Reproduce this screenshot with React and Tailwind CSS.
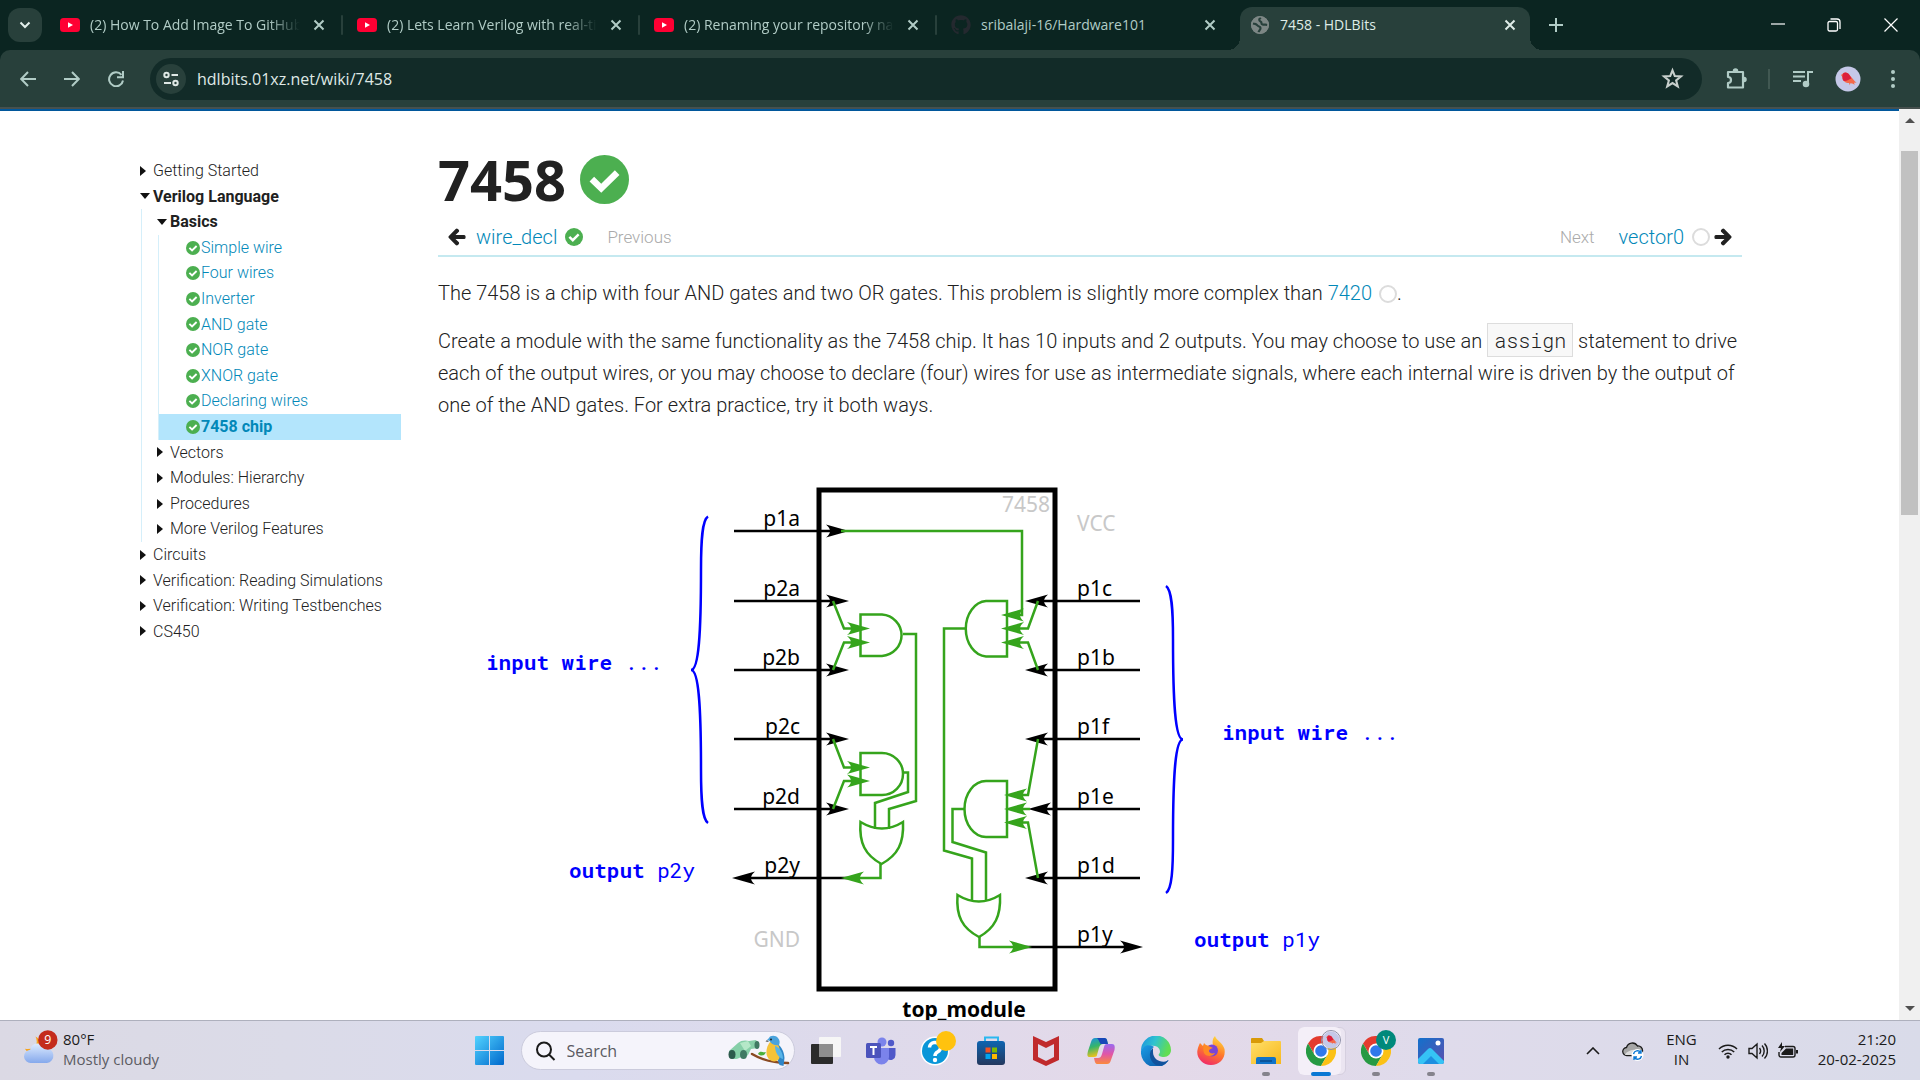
import React from "react";
import { FaArrowLeft, FaArrowRight, FaGithub } from "react-icons/fa";

const UI = "font-['Segoe_UI','Open_Sans',sans-serif]";

/* ---------- browser chrome ---------- */

function YouTubeIcon() {
  return (
    <svg viewBox="0 0 20 16" className="h-4 w-5 shrink-0" aria-hidden="true">
      <rect y="1" width="20" height="14" rx="3.5" fill="#ff0033" />
      <path d="M8 5.2v5.6L13 8z" fill="#fff" />
    </svg>
  );
}

function GlobeIcon() {
  return (
    <svg viewBox="0 0 20 20" className="h-5 w-5 shrink-0" aria-hidden="true">
      <circle cx="10" cy="10" r="9" fill="#7d8785" />
      <path d="M2.500 8.500c2 0 4 .5 5 2s3 .5 3 2.500-1.500 2-2 4.500M11 2.500c-2 1-2.500 3-.5 4s0 2.500 2 3 3-.5 5 .5" fill="none" stroke="#28403b" strokeWidth="2.200" />
      <circle cx="10" cy="10" r="8.200" fill="none" stroke="#7d8785" strokeWidth="1.600" />
    </svg>
  );
}

function CloseIcon() {
  return (
    <svg viewBox="0 0 12 12" className="h-3 w-3" aria-hidden="true">
      <path d="M1.500 1.500l9 9M10.500 1.500l-9 9" stroke="currentColor" strokeWidth="2" fill="none" />
    </svg>
  );
}

const TABS = [
  { title: "(2) How To Add Image To GitHub", icon: <YouTubeIcon />, fade: true },
  { title: "(2) Lets Learn Verilog with real-time", icon: <YouTubeIcon />, fade: true },
  { title: "(2) Renaming your repository name", icon: <YouTubeIcon />, fade: true },
  { title: "sribalaji-16/Hardware101", icon: <FaGithub className="h-5 w-5 shrink-0 text-[#24292f]" /> },
];

function TabStrip() {
  return (
    <div className="flex h-[50px] items-stretch bg-[#0b2521] text-sm text-[#b1ccc6]">
      <div className="flex w-[46px] items-center pl-2">
        <button aria-label="Search tabs" className="flex h-[34px] w-[34px] items-center justify-center rounded-xl bg-[#28403b] text-[#e2efeb]">
          <svg viewBox="0 0 12 8" className="h-2 w-3"><path d="M1.500 1.500L6 6l4.500-4.500" stroke="currentColor" strokeWidth="2" fill="none" /></svg>
        </button>
      </div>
      <div className="flex min-w-0 flex-1" role="tablist">
        {TABS.map((t, i) => (
          <div key={t.title} className="flex w-[297px] min-w-0 items-center">
            <button role="tab" aria-selected="false" className="flex min-w-0 flex-1 items-center gap-[10px] pl-[14px] text-left">
              {t.icon}
              <span
                className={
                  t.fade
                    ? "w-[210px] overflow-hidden whitespace-nowrap [mask-image:linear-gradient(to_right,black_85%,transparent)]"
                    : "w-[210px] overflow-hidden whitespace-nowrap"
                }
              >
                {t.title}
              </span>
            </button>
            <button aria-label={`Close ${t.title}`} className="flex h-5 w-5 items-center justify-center"><CloseIcon /></button>
            <span className={i < 3 ? "ml-3 h-5 w-[2px] rounded bg-[#28403b]" : "ml-3 h-5 w-[2px]"} />
          </div>
        ))}
        <div className="relative mt-[7px] ml-[6px] flex w-[290px] min-w-0 items-center rounded-t-xl bg-[#28403b] pb-[7px] pr-[10px] text-[#dfece8]">
          <span className="absolute -left-3 bottom-0 h-3 w-3 bg-[radial-gradient(circle_at_0_0,transparent_12px,#28403b_12px)]" />
          <span className="absolute -right-3 bottom-0 h-3 w-3 bg-[radial-gradient(circle_at_100%_0,transparent_12px,#28403b_12px)]" />
          <button role="tab" aria-selected="true" className="flex min-w-0 flex-1 items-center gap-[10px] pl-[10px] text-left">
            <GlobeIcon />
            <span className="whitespace-nowrap">7458 - HDLBits</span>
          </button>
          <button aria-label="Close 7458 - HDLBits" className="flex h-5 w-5 items-center justify-center"><CloseIcon /></button>
        </div>
        <button aria-label="New tab" className="ml-3 flex w-7 items-center justify-center">
          <svg viewBox="0 0 14 14" className="h-[14px] w-[14px]"><path d="M7 0v14M0 7h14" stroke="currentColor" strokeWidth="2" /></svg>
        </button>
      </div>
      <div className="flex text-white">
        <button aria-label="Minimize" className="flex w-14 items-center justify-center">
          <svg viewBox="0 0 14 14" className="h-[14px] w-[14px]"><path d="M0 6h14" stroke="currentColor" strokeWidth="1.200" /></svg>
        </button>
        <button aria-label="Restore" className="flex w-14 items-center justify-center">
          <svg viewBox="0 0 14 14" className="h-[14px] w-[14px]" fill="none" stroke="currentColor" strokeWidth="1.300">
            <rect x="1" y="3.500" width="9.500" height="9.500" rx="1.500" />
            <path d="M3.500 1h6.500a3 3 0 0 1 3 3v7" />
          </svg>
        </button>
        <button aria-label="Close window" className="flex w-[58px] items-center justify-center">
          <svg viewBox="0 0 14 14" className="h-[14px] w-[14px]"><path d="M.5.5l13 13M13.500.5l-13 13" stroke="currentColor" strokeWidth="1.200" /></svg>
        </button>
      </div>
    </div>
  );
}

function Bird({ className }) {
  return (
    <svg viewBox="0 0 26 26" className={className} aria-hidden="true">
      <circle cx="13" cy="13" r="12.500" fill="#c5c8e8" />
      <path d="M6 9l2.500-2c2-1.500 5 0 6 2l5.500 6.500 1.500 1-2.500.2.800 2-2.500-1.200-2-.3-.5 2-.8-2.200c-3.500 0-6.500-2-6.300-5.500z" fill="#f4694a" />
      <path d="M8.500 7c2-1.500 5 0 6 2l2 3.500c-2 .5-5 3-7.500 2.500C7 14 7.300 10 7.600 9z" fill="#dc1f3c" />
    </svg>
  );
}

function Toolbar() {
  const nav = "flex h-9 w-11 items-center justify-center";
  return (
    <div className="bg-[#0b2521]">
      <div className="flex h-[57px] items-center rounded-t-[10px] bg-[#28403b] pl-[6px] text-[#b1ccc6]">
        <button aria-label="Back" className={nav}>
          <svg viewBox="0 0 16 16" className="h-4 w-4" fill="none" stroke="currentColor" strokeWidth="2"><path d="M16 8H1.500M8 1L1.200 8 8 15" /></svg>
        </button>
        <button aria-label="Forward" className={nav}>
          <svg viewBox="0 0 16 16" className="h-4 w-4" fill="none" stroke="currentColor" strokeWidth="2"><path d="M0 8h14.500M8 1l6.800 7L8 15" /></svg>
        </button>
        <button aria-label="Reload" className={nav}>
          <svg viewBox="0 0 16 16" className="h-4 w-4" fill="none" stroke="currentColor" strokeWidth="2"><path d="M13.500 3.800A7 7 0 1 0 15 9.500M15 0v6.200H9" /></svg>
        </button>
        <div className="ml-3 flex h-[42px] flex-1 items-center rounded-full bg-[#122b28] pl-[6px] pr-[18px] text-[#dfe8e5]">
          <button aria-label="View site information" className="flex h-[30px] w-[30px] items-center justify-center rounded-full bg-[#28403b]">
            <svg viewBox="0 0 16 16" className="h-4 w-4" fill="none" stroke="currentColor" strokeWidth="2">
              <circle cx="3.500" cy="4" r="2.200" /><path d="M8.500 4H15M1 12h7" /><circle cx="12.500" cy="12" r="2.200" />
            </svg>
          </button>
          <input aria-label="Address" defaultValue="hdlbits.01xz.net/wiki/7458" className="ml-[11px] min-w-0 flex-1 bg-transparent text-[16px] outline-none" />
          <button aria-label="Bookmark this tab">
            <svg viewBox="0 0 24 24" className="h-[23px] w-[23px]" fill="none" stroke="#c7cfcc" strokeWidth="2.200"><path d="M12 3.500l2.400 6 6.400.4-5 4.100 1.700 6.300-5.500-3.500-5.500 3.500 1.700-6.300-5-4.100 6.400-.4z" /></svg>
          </button>
        </div>
        <div className="flex w-[218px] items-center">
          <button aria-label="Extensions" className="ml-[22px] flex w-6 justify-center">
            <svg viewBox="0 0 24 24" className="h-6 w-6" fill="none" stroke="currentColor" strokeWidth="2.200" strokeLinejoin="round">
              <path d="M4 5h15v15.500H4v-4.500a3 3 0 0 0 0-6z" /><path d="M9.500 4a2 2 0 0 1 4 0zM20 10.500a2 2 0 0 1 0 4z" fill="currentColor" strokeWidth="1.500" />
            </svg>
          </button>
          <span className="ml-5 h-5 w-[2px] bg-[#415852]" />
          <button aria-label="Media" className="ml-[23px]">
            <svg viewBox="0 0 20 18" className="h-[18px] w-5" fill="none" stroke="currentColor" strokeWidth="2">
              <path d="M0 2h12M0 6.500h12M0 11h8M15 14V2h5" /><circle cx="13" cy="14" r="2.300" fill="currentColor" />
            </svg>
          </button>
          <button aria-label="Profile" className="ml-[22px]"><Bird className="h-[26px] w-[26px]" /></button>
          <button aria-label="Menu" className="ml-[30px]">
            <svg viewBox="0 0 4 20" className="h-5 w-1" fill="currentColor"><circle cx="2" cy="3" r="2" /><circle cx="2" cy="10" r="2" /><circle cx="2" cy="17" r="2" /></svg>
          </button>
        </div>
      </div>
      <div className="h-[2px] bg-[#46504e]" />
    </div>
  );
}

/* ---------- page ---------- */

function Check({ className }) {
  return (
    <svg viewBox="0 0 24 24" className={className} aria-hidden="true">
      <circle cx="12" cy="12" r="12" fill="#4caf50" />
      <path d="M5.800 11.800l4.600 4.500 7.800-7.700" fill="none" stroke="#fff" strokeWidth="3.200" />
    </svg>
  );
}

function Ring() {
  return <span className="inline-block h-[18px] w-[18px] shrink-0 rounded-full border-2 border-[#dcdcdc] align-[-3px]" />;
}

function Caret({ open }) {
  return open ? (
    <svg viewBox="0 0 10 6" className="h-[6px] w-[10px]" aria-hidden="true"><path d="M0 0h10L5 6z" fill="#111" /></svg>
  ) : (
    <svg viewBox="0 0 6 10" className="h-[10px] w-[6px]" aria-hidden="true"><path d="M0 0v10l6-5z" fill="#111" /></svg>
  );
}

function Node({ label, open, children }) {
  return (
    <li>
      <button className={open ? "flex items-center font-bold text-[#212121]" : "flex items-center"}>
        <span className="flex w-[13px] items-center"><Caret open={open} /></span>
        {label}
      </button>
      {children}
    </li>
  );
}

const BASICS = ["Simple wire", "Four wires", "Inverter", "AND gate", "NOR gate", "XNOR gate", "Declaring wires", "7458 chip"];

function Sidebar() {
  return (
    <nav className="mt-[47px] w-[261px] shrink-0 text-base leading-[1.6] font-light text-[#212121]">
      <ul>
        <Node label="Getting Started" />
        <Node label="Verilog Language" open>
          <ul className="ml-px border-l border-[#d5effa] pl-[15px]">
            <Node label="Basics" open>
              <ul className="ml-px border-l border-[#d5effa]">
                {BASICS.map((b) => (
                  <li key={b} className={b === "7458 chip" ? "bg-[#b3e5fc] pl-[27px] font-bold" : "pl-[27px]"}>
                    <a href="#" className="flex items-center gap-px text-[#0288b8]">
                      <Check className="h-[14px] w-[14px]" />
                      {b}
                    </a>
                  </li>
                ))}
              </ul>
            </Node>
            <Node label="Vectors" />
            <Node label="Modules: Hierarchy" />
            <Node label="Procedures" />
            <Node label="More Verilog Features" />
          </ul>
        </Node>
        <Node label="Circuits" />
        <Node label="Verification: Reading Simulations" />
        <Node label="Verification: Writing Testbenches" />
        <Node label="CS450" />
      </ul>
    </nav>
  );
}

/* Arrow head with a notched back; (x, y) is the tip, dir is 1 for right and -1 for left. */
function Head({ x, y, dir = 1, color = "#000" }) {
  const d = dir;
  return <path d={`M${x} ${y}L${x - 23 * d} ${y - 6.5}Q${x - 15 * d} ${y} ${x - 23 * d} ${y + 6.5}Z`} fill={color} />;
}

const GREEN = "#35a41c";
const ROWS = [530, 600, 669, 738, 808, 877, 946];

function Diagram() {
  return (
    <svg viewBox="470 470 950 580" className="mt-[50px] ml-8 h-[580px] w-[950px] font-normal" role="img" aria-label="7458 chip diagram" fill="none">
      <rect x="819" y="489" width="236" height="499" stroke="#000" strokeWidth="5" />
      <g stroke="#000" strokeWidth="2.500">
        {ROWS.slice(0, 5).map((y) => <path key={y} d={`M734 ${y}H836`} />)}
        <path d="M750 877H850" />
        {ROWS.slice(1, 6).map((y) => <path key={y} d={`M1140 ${y}H1040`} />)}
        <path d="M1025 946H1126" />
      </g>
      {ROWS.slice(0, 5).map((y) => <Head key={y} x={849} y={y} />)}
      <Head x={732} y={877} dir={-1} />
      {ROWS.slice(1, 6).map((y) => <Head key={y} x={y === 808 ? 1028 : 1025} y={y} dir={-1} />)}
      <Head x={1143} y={946} />

      <g stroke={GREEN} strokeWidth="2.500">
        <path d="M841 530H1022V614H1012" />
        <path d="M860.500 613.500V655H882A21 20.800 0 0 0 882 613.500Z" />
        <path d="M860.500 752V794H882A21 21 0 0 0 882 752Z" />
        <path d="M1007 600V655.500H986A21.500 27.800 0 0 1 986 600Z" />
        <path d="M1007 780V836H986A21.500 28 0 0 1 986 780Z" />
        <path d="M833 600L844 627.500H858M833 669L844 641.500H858" />
        <path d="M833 738L844 766.500H858M833 808L844 780H858" />
        <path d="M1038 600L1028 627.500H1012M1038 669L1028 641.500H1012" />
        <path d="M1038 738L1028 794H1018M1038 877L1028 821.500H1018M1030 808H1014" />
        <path d="M903 633H916V800L889 808V828" />
        <path d="M903 771.500H908V791L875 802V828" />
        <path d="M965 627.500H944V849.500L972 857.500V900" />
        <path d="M965 808H952.500V841L986 851.500V900" />
        <path d="M860.500 821Q882 834 903 821C904 842 898 854 881.500 863C865 854 859 842 860.500 821Z" />
        <path d="M957.500 894Q979 907 1000 894C1001 915 995 927 979 936C962 927 956 915 957.500 894Z" />
        <path d="M880.500 862V877H858M979.500 935V946H1014" />
      </g>
      {[614, 627.5, 641.5].map((y) => <Head key={y} x={1001} y={y} dir={-1} color={GREEN} />)}
      <Head x={1004} y={794} dir={-1} color={GREEN} />
      <Head x={1004} y={808} dir={-1} color={GREEN} />
      <Head x={1004} y={821.5} dir={-1} color={GREEN} />
      {[627.5, 641.5, 766.5, 780].map((y) => <Head key={y} x={870} y={y} color={GREEN} />)}
      <Head x={841} y={877} dir={-1} color={GREEN} />
      <Head x={1032} y={946} color={GREEN} />

      <g stroke="#0000ff" strokeWidth="2.500">
        <path d="M708 515.500C702 519 701 540 701 569C701 630 699 669 691 669C699 669 701 708 701 769C701 798 702 818 708 822" />
        <path d="M1166 585C1172 589 1173 609 1173 638C1173 700 1175 738.500 1183 738.500C1175 738.500 1173 777 1173 838C1173 868 1172 888 1166 892" />
      </g>

      <g className="font-['Noto_Sans',sans-serif] text-[21px]" fill="#000">
        <g textAnchor="end">
          {["p1a", "p2a", "p2b", "p2c", "p2d", "p2y"].map((t, i) => <text key={t} x="800" y={ROWS[i] - 5}>{t}</text>)}
          <text x="800" y="946" fill="#c8c8c8">GND</text>
          <text x="1050" y="511" fill="#c8c8c8">7458</text>
        </g>
        {["p1c", "p1b", "p1f", "p1e", "p1d", "p1y"].map((t, i) => <text key={t} x="1077" y={ROWS[i + 1] - 5}>{t}</text>)}
        <text x="1077" y="530" fill="#c8c8c8">VCC</text>
        <text x="964" y="1016" textAnchor="middle" className="font-bold">top_module</text>
      </g>
      <g className="font-['Roboto_Mono','DejaVu_Sans_Mono',monospace] text-[21px]" fill="#0000ff">
        <text x="486" y="669"><tspan className="font-bold">input wire</tspan> ...</text>
        <text x="569" y="877"><tspan className="font-bold">output</tspan> p2y</text>
        <text x="1222" y="739"><tspan className="font-bold">input wire</tspan> ...</text>
        <text x="1194" y="946"><tspan className="font-bold">output</tspan> p1y</text>
      </g>
    </svg>
  );
}

function Article() {
  return (
    <main className="mr-[157px] ml-[37px] min-w-0 flex-1 text-xl leading-8 font-light text-[#212121]">
      <h1 className="mt-9 flex h-[64px] items-center gap-[14px] font-['Noto_Sans',sans-serif] text-[56px] leading-none font-bold">
        7458 <Check className="h-[49px] w-[49px]" />
      </h1>
      <div className="mt-2 flex h-[38px] items-center border-b-2 border-[#c5e9f0] px-[10px]">
        <FaArrowLeft className="h-[18px] w-[18px] text-[#212121]" stroke="currentColor" strokeWidth="40" />
        <a href="#" className="mr-2 ml-[10px] text-[#0288b8]">wire_decl</a>
        <Check className="h-[18px] w-[18px]" />
        <span className="ml-6 text-[17px] text-[#aaa]">Previous</span>
        <span className="mr-6 ml-auto text-[17px] text-[#aaa]">Next</span>
        <a href="#" className="mr-2 text-[#0288b8]">vector0</a>
        <Ring />
        <FaArrowRight className="ml-1 h-[18px] w-[18px] text-[#212121]" stroke="currentColor" strokeWidth="40" />
      </div>
      <p className="mt-5">
        The 7458 is a chip with four AND gates and two OR gates. This problem is slightly more complex than{" "}
        <a href="#" className="mr-0.5 text-[#0288b8]">7420</a> <Ring />.
      </p>
      <p className="mt-4">
        Create a module with the same functionality as the 7458 chip. It has 10 inputs and 2 outputs. You may choose to use an{" "}
        <code className="border border-[#ddd] bg-[#f8f8f8] px-[6px] py-[3px] font-['Roboto_Mono','Liberation_Mono',monospace] text-xl">assign</code>{" "}
        statement to drive each of the output wires, or you may choose to declare (four) wires for use as intermediate
        signals, where each internal wire is driven by the output of one of the AND gates. For extra practice, try it
        both ways.
      </p>
      <Diagram />
    </main>
  );
}

function Scrollbar() {
  return (
    <div className="flex w-[21px] shrink-0 flex-col items-center bg-[#f0f0f0] pt-2 pb-2">
      <svg viewBox="0 0 10 6" className="h-[6px] w-[10px]"><path d="M0 6l5-5 5 5z" fill="#505050" /></svg>
      <div className="mt-7 h-[364px] w-[17px] bg-[#c1c1c1]" />
      <svg viewBox="0 0 10 6" className="mt-auto h-[6px] w-[10px]"><path d="M0 0l5 5 5-5z" fill="#505050" /></svg>
    </div>
  );
}

/* ---------- taskbar ---------- */

function Chrome() {
  return (
    <svg viewBox="0 0 30 30" className="h-[30px] w-[30px]" aria-hidden="true">
      <path d="M2 7.500A15 15 0 0 1 28 7.500H15L8.500 18.500z" fill="#e33b2e" />
      <path d="M2 7.500A15 15 0 0 0 15 30L21.500 18.700 15 22 8.500 18.700z" fill="#269a43" />
      <path d="M28 7.500A15 15 0 0 1 15 30L21.500 18.700 21.500 11 15 7.500z" fill="#fbc116" />
      <circle cx="15" cy="15" r="7.500" fill="#fff" /><circle cx="15" cy="15" r="5.800" fill="#3079ea" />
    </svg>
  );
}

const APPS = [
  {
    name: "Task view",
    icon: (
      <svg viewBox="0 0 30 30" className="h-[30px] w-[30px]">
        <rect y="8" width="22" height="20" rx="1" fill="#2b2b2b" /><rect x="8" y="1" width="22" height="20" rx="1" fill="#f6f6f6" /><path d="M8 8h14v13H8z" fill="#8e8e8e" />
      </svg>
    ),
  },
  {
    name: "Teams",
    icon: (
      <svg viewBox="0 0 30 30" className="h-[30px] w-[30px]">
        <circle cx="25" cy="7" r="3.200" fill="#5059c9" /><path d="M20 12h9.500v7a5 5 0 0 1-8 4z" fill="#5059c9" />
        <circle cx="16" cy="6" r="4.500" fill="#7b83eb" /><path d="M8 12h15v9a7.300 7.300 0 0 1-15 0z" fill="#7b83eb" />
        <rect y="7" width="15" height="15" rx="1.500" fill="#4b53bc" /><path d="M4 11h7M7.500 11v8" stroke="#fff" strokeWidth="2" />
      </svg>
    ),
  },
  {
    name: "Get help",
    icon: (
      <svg viewBox="0 0 36 36" className="mb-1 ml-1 h-9 w-9">
        <circle cx="15" cy="20" r="14.500" fill="#fff" /><circle cx="15" cy="20" r="13" fill="#0a96d8" />
        <path d="M9.500 16.500a5.500 5 0 1 1 8 4.500c-2 1.200-2.500 2-2.500 4" fill="none" stroke="#fff" strokeWidth="3.500" /><circle cx="15" cy="29" r="2.200" fill="#fff" />
        <circle cx="26" cy="10" r="10" fill="#ffc20e" />
      </svg>
    ),
  },
  {
    name: "Microsoft Store",
    icon: (
      <svg viewBox="0 0 30 30" className="h-[30px] w-[30px]">
        <defs><linearGradient id="store" x2="0" y2="1"><stop stopColor="#0e64b0" /><stop offset="1" stopColor="#24385e" /></linearGradient></defs>
        <path d="M9 6V1.500h13V6" fill="none" stroke="#2bb8f0" strokeWidth="2" /><rect x="1" y="5" width="28" height="24" rx="3" fill="url(#store)" />
        <path d="M9.500 11.500h5v5h-5z" fill="#f25022" /><path d="M16 11.500h5v5h-5z" fill="#7fba00" /><path d="M9.500 18h5v5h-5z" fill="#00a4ef" /><path d="M16 18h5v5h-5z" fill="#ffb900" />
      </svg>
    ),
  },
  {
    name: "McAfee",
    icon: (
      <svg viewBox="0 0 28 30" className="h-[30px] w-7">
        <path d="M1 0l13 6L27 0v24l-13 6-13-6zM6 8v13l8 4 8-4V8l-8 4z" fill="#c02a2c" fillRule="evenodd" />
      </svg>
    ),
  },
  {
    name: "Copilot",
    icon: (
      <svg viewBox="0 0 28 26" className="h-[26px] w-7">
        <defs>
          <linearGradient id="cpa" x2=".3" y2="1"><stop stopColor="#1a8fe8" /><stop offset=".5" stopColor="#35b56a" /><stop offset="1" stopColor="#f2c21a" /></linearGradient>
          <linearGradient id="cpb" x2="0" y2="1"><stop stopColor="#9a6bf0" /><stop offset=".5" stopColor="#e055a8" /><stop offset="1" stopColor="#fb8a3c" /></linearGradient>
        </defs>
        <path d="M8 0h9c3 0 3 2 4 6h-5c-2 0-3 1-4 4l-2 7c0 1-1 2-3 2H3c-3 0-3-2-2-6L4 4c1-3 2-4 4-4z" fill="url(#cpa)" />
        <path d="M17 0c3 0 3 2 4 6h-5c-2 0-3 0-3-1L11.500 2c-.5-1-1-2-2-2z" fill="#1747b8" />
        <path d="M20 26h-9c-3 0-3-2-4-6h4c2 0 3-1 4-4l2-7c.5-2 1-3 3-3h5c3 0 3 3 2.500 6L24 22c-1 3-2 4-4 4z" fill="url(#cpb)" />
      </svg>
    ),
  },
  {
    name: "Edge",
    icon: (
      <svg viewBox="0 0 30 30" className="h-[30px] w-[30px]">
        <defs>
          <linearGradient id="eda" x2="1" y2=".3"><stop stopColor="#1b8fe0" /><stop offset=".5" stopColor="#2fc3cf" /><stop offset="1" stopColor="#62dd52" /></linearGradient>
          <linearGradient id="edb" x2="1" y2="1"><stop stopColor="#1a9de6" /><stop offset="1" stopColor="#0a50a0" /></linearGradient>
        </defs>
        <path d="M0 15A15 15 0 0 1 30 14c0 4-3 7-7 7-5 0-6-2-5-3 2-2 1-7-4-8C8 9 2 10 0 15z" fill="url(#eda)" />
        <path d="M0 15c2-6 9-7 13-4-4 2-4 8-1 12 4 5 11 5 15 1l.5.5A15 15 0 0 1 0 15z" fill="url(#edb)" />
        <path d="M12 12c-5 4-4 13 3 17 5 1.500 9-.5 12.500-4.500C21 28 12 24 12 16z" fill="#12529c" />
      </svg>
    ),
  },
  {
    name: "Firefox",
    icon: (
      <svg viewBox="0 0 28 30" className="h-[30px] w-7">
        <defs><linearGradient id="ff" x1=".7" x2=".3" y2="1"><stop stopColor="#ffd93a" /><stop offset=".5" stopColor="#ff7a2a" /><stop offset="1" stopColor="#f0286a" /></linearGradient></defs>
        <path d="M3 7l3 3 1-3 3 3c2-1 5-1 6-1-1-4 0-7 2-9 1 4 8 7 9.500 13C29 22 23 29 14 29S-1 21 .5 14C1 11 2 9 3 7z" fill="url(#ff)" />
        <circle cx="15" cy="14.500" r="6" fill="#7a45d6" /><path d="M7 9c4 0 6 2 9 3-2 1-4 1-4 3s3 3 6 2c-2 4-9 4-11 0-1-3-1-6 0-8z" fill="#ff8a24" />
      </svg>
    ),
  },
  {
    name: "File Explorer",
    running: true,
    icon: (
      <svg viewBox="0 0 30 28" className="h-7 w-[30px]">
        <defs><linearGradient id="fx" x2="1" y2="1"><stop stopColor="#ffdf6a" /><stop offset="1" stopColor="#f7b81d" /></linearGradient></defs>
        <path d="M0 2a1 1 0 0 1 1-1h10l2 3v4H0z" fill="#d99a08" /><path d="M0 6h10l3-2h16a1 1 0 0 1 1 1v22H0z" fill="url(#fx)" />
        <path d="M5 27v-5a2 2 0 0 1 2-2h16a2 2 0 0 1 2 2v5z" fill="#1173c8" /><path d="M9 24h12" stroke="#0a4b8c" strokeWidth="1.500" />
      </svg>
    ),
  },
  { name: "Chrome", active: true, icon: <Chrome />, badge: <Bird className="absolute right-[5px] top-[3px] h-5 w-5 rounded-full border border-[#8e90a8]" /> },
  {
    name: "Chrome profile V",
    running: true,
    icon: <Chrome />,
    badge: <span className="absolute right-[5px] top-[3px] flex h-5 w-5 items-center justify-center rounded-full bg-[#00897b] text-[11px] text-white">V</span>,
  },
  {
    name: "Photos",
    running: true,
    icon: (
      <svg viewBox="0 0 26 26" className="h-[26px] w-[26px]">
        <defs><linearGradient id="ph" x2="1" y2="1"><stop stopColor="#1271cc" /><stop offset="1" stopColor="#5c4fae" /></linearGradient></defs>
        <rect width="26" height="26" rx="2" fill="url(#ph)" /><path d="M0 21l10-10a3 3 0 0 1 4 0l12 12v1a2 2 0 0 1-2 2H2a2 2 0 0 1-2-2z" fill="#35c3f5" />
        <path d="M5 26l8-8 8 8z" fill="#1d8fe0" /><circle cx="20" cy="5" r="2.500" fill="#fff" />
      </svg>
    ),
  },
];

function Taskbar() {
  return (
    <footer className="grid h-[60px] shrink-0 grid-cols-[1fr_auto_1fr] items-center border-t border-[#aeb0bd] bg-[linear-gradient(90deg,#dbd9e4_0%,#dbdbe8_15%,#dadbee_30%,#dedaeb_45%,#e4d9e9_60%,#dfdbeb_75%,#d9dbe9_100%)] text-[15px] leading-5 text-[#1b1b1b]">
      <button className="flex items-center gap-[9px] justify-self-start pb-1 pl-6 text-left">
        <svg viewBox="0 0 34 36" className="mb-1 h-9 w-[30px] overflow-visible" aria-hidden="true">
          <defs><linearGradient id="cl" x2="0" y2="1"><stop stopColor="#dcebff" /><stop offset="1" stopColor="#86a9ec" /></linearGradient></defs>
          <path d="M13 6c4 8 0 16-12 14 3 5 9 7 14 4s6-14-2-18z" fill="#f6a21a" />
          <path d="M8 36a7.500 7.500 0 0 1-1-15 9 9 0 0 1 17-1.500A8.300 8.300 0 0 1 26 36z" fill="url(#cl)" />
          <circle cx="27" cy="10" r="11" fill="#c42b1c" />
          <text x="27" y="15" textAnchor="middle" fill="#fff" className="text-[14px]">9</text>
        </svg>
        <span>80°F<br /><span className="text-[#5c5c63]">Mostly cloudy</span></span>
      </button>

      <div className="flex items-center">
        <button aria-label="Start" className="flex w-[55px] justify-center">
          <svg viewBox="0 0 29 29" className="h-[29px] w-[29px]">
            <defs><linearGradient id="win" x2="1" y2="1" gradientUnits="userSpaceOnUse" x1="0" y1="0" gradientTransform="scale(29)"><stop stopColor="#52d3ff" /><stop offset="1" stopColor="#0068cc" /></linearGradient></defs>
            <path d="M0 1a1 1 0 0 1 1-1h13v14H0zM15 0h13a1 1 0 0 1 1 1v13H15zM0 15h14v14H1a1 1 0 0 1-1-1zM15 15h14v13a1 1 0 0 1-1 1H15z" fill="url(#win)" />
          </svg>
        </button>
        <label className="mx-1 flex h-[39px] w-[274px] items-center rounded-full border border-[#cbcbdc] bg-[#f5f4fb] pr-1 pl-[14px]">
          <svg viewBox="0 0 20 20" className="h-5 w-5 shrink-0" fill="none" stroke="#1b1b1b" strokeWidth="2"><circle cx="8" cy="8.500" r="7" /><path d="M13 13.500l5.500 5.500" /></svg>
          <input type="search" aria-label="Search" placeholder="Search" className="ml-[11px] w-0 flex-1 bg-transparent text-[16px] outline-none placeholder:text-[#5a5a62]" />
          <svg viewBox="0 0 62 32" className="h-8 w-[62px] shrink-0" aria-hidden="true">
            <path d="M1 16l9-8c3-3 8-3 11-2l7-1 3 4-1 4-7 1-3 6c-3 3-6 1-9 3s-10 1-10-2z" fill="#86cfa8" />
            <path d="M12 8l8-2 3 5-6 5z" fill="#b5e8c8" />
            <ellipse cx="4" cy="19.500" rx="3.500" ry="4.500" fill="#2d5a4c" /><ellipse cx="15.500" cy="19.500" rx="3.500" ry="4.500" fill="#3f7a63" /><ellipse cx="29" cy="10" rx="2.500" ry="4" fill="#3f7a63" />
            <path d="M24 19c10 6 20 9 36 9" stroke="#8a4a22" strokeWidth="2.500" fill="none" strokeLinecap="round" /><path d="M30 19c2-4 5-1 8-2-1 3-4 5-8 2z" fill="#4caf3a" />
            <path d="M47 8c6 2 9 8 9.500 15l-1 8-4-1-3-8z" fill="#2f86c8" />
            <path d="M42 7c-3 4-4.500 9-3 14 2 6 9 7 12 3 2-5 1-12-2-16z" fill="#f6c338" />
            <path d="M39 5l2-2c1-3 7-3 9 0 2 2 2 5 1 7-3 1-7 0-9.500-4z" fill="#4aa3dc" />
            <path d="M39 5l-1.500 1.500L41 7z" fill="#555" /><path d="M47 11c4 1 8 6 8 13-4-1-8-6-8-13z" fill="#58b4e8" /><circle cx="43" cy="4.500" r="1" fill="#222" />
          </svg>
        </label>
        {APPS.map((a) => (
          <button key={a.name} aria-label={a.name} className="relative flex h-[59px] w-[55px] items-center justify-center">
            {a.active && <span className="absolute top-[6px] left-[4px] h-[48px] w-[48px] rounded-md border border-[#d5cfdf] bg-[#ebe5f1]" />}
            {a.active && <span className="absolute top-[6px] left-[4px] h-[48px] w-[43px] rounded-md bg-[#f4eff8]" />}
            <span className="relative flex h-[48px] w-[50px] items-center justify-center">
              {a.icon}
              {a.badge}
            </span>
            {a.running && <span className="absolute bottom-1 h-1 w-2 rounded-full bg-[#85838c]" />}
            {a.active && <span className="absolute bottom-1 h-1 w-5 rounded-full bg-[#0a78d4]" />}
          </button>
        ))}
      </div>

      <div className="flex items-center justify-self-end pr-6">
        <button aria-label="Show hidden icons" className="mr-[22px]">
          <svg viewBox="0 0 14 8" className="h-2 w-[14px]"><path d="M1 7l6-6 6 6" fill="none" stroke="#1b1b1b" strokeWidth="1.600" /></svg>
        </button>
        <button aria-label="OneDrive" className="mr-[22px]">
          <svg viewBox="0 0 22 20" className="h-5 w-[22px]">
            <path d="M5 14.500a4 4 0 0 1-.5-8A6 6 0 0 1 15.500 5a4.500 4.500 0 0 1 5 5c0 3-1 4.500-4 4.500z" fill="#a6a6a6" stroke="#1b1b1b" strokeWidth="1.300" />
            <path d="M3 14c1-4 8-6 14-5v5z" fill="#dcdcdc" /><circle cx="15.500" cy="14" r="6" fill="#fff" />
            <path d="M11.500 13a4 4 0 0 1 7.200-1.500M19.500 15a4 4 0 0 1-7.200 1.500M19 9v3h-3M12 19v-3h3" fill="none" stroke="#0a78d4" strokeWidth="1.400" />
          </svg>
        </button>
        <button className="mr-[21px] pb-[3px] text-center">ENG<br />IN</button>
        <button aria-label="Network, volume and battery" className="mr-5 flex items-center gap-[10px]">
          <svg viewBox="0 0 20 16" className="h-4 w-5" fill="none" stroke="#1b1b1b" strokeWidth="1.500">
            <path d="M1 6a12.500 12.500 0 0 1 18 0M3.800 9a8.700 8.700 0 0 1 12.400 0M6.500 11.800a5 5 0 0 1 7 0" /><circle cx="10" cy="14" r="1.700" fill="#1b1b1b" stroke="none" />
          </svg>
          <svg viewBox="0 0 20 18" className="h-[18px] w-5" fill="none" stroke="#1b1b1b" strokeWidth="1.400">
            <path d="M1 6.500h3L9 2v14l-5-4.500H1zM11.500 6a5 5 0 0 1 0 6M14 3.500a8 8 0 0 1 0 11M16.500 1.500a11 11 0 0 1 0 15" />
          </svg>
          <svg viewBox="0 0 20 18" className="h-[18px] w-5">
            <path d="M7 4.500h8a2 2 0 0 1 2 2v6.500a2 2 0 0 1-2 2H3a2 2 0 0 1-2-2V10" fill="none" stroke="#1b1b1b" strokeWidth="1.400" />
            <path d="M8 6.500h7.200v6.500H3.500v-2z" fill="#1b1b1b" /><path d="M18 8h2v3.500h-2z" fill="#1b1b1b" /><path d="M4 0L0 6h3l-1 4 5-6H4z" fill="#1b1b1b" />
          </svg>
        </button>
        <button className="pb-[3px] text-right">21:20<br />20-02-2025</button>
      </div>
    </footer>
  );
}

export default function App() {
  return (
    <div className={`flex h-screen flex-col overflow-hidden bg-white ${UI}`}>
      <header className="shrink-0">
        <TabStrip />
        <Toolbar />
      </header>
      <div className="flex min-h-0 flex-1">
        <div className="flex min-w-0 flex-1 overflow-hidden border-t-2 border-[#01579b] bg-white pl-[140px] font-['Roboto',sans-serif]">
          <Sidebar />
          <Article />
        </div>
        <Scrollbar />
      </div>
      <Taskbar />
    </div>
  );
}
